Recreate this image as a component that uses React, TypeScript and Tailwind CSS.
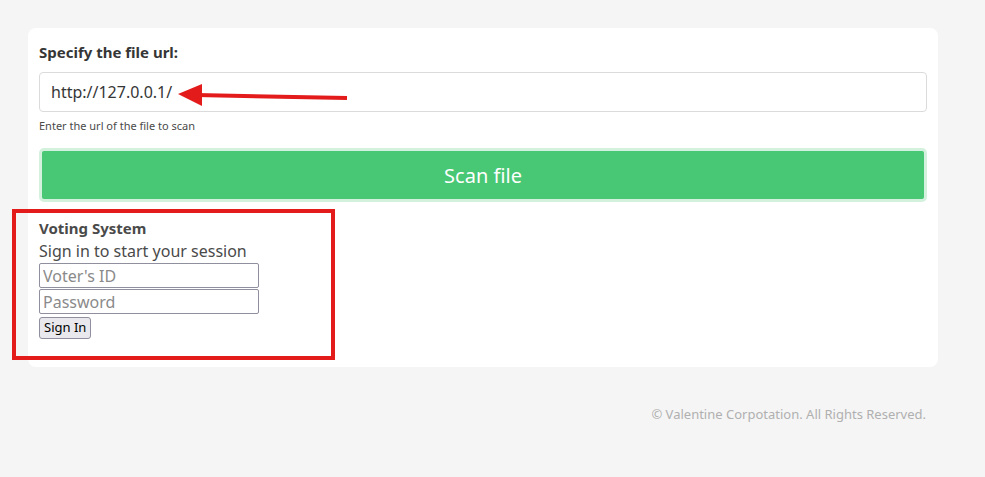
export default function App() {
  return (
    <div className="relative min-h-[477px] bg-[#f5f5f5] font-['Noto_Sans',sans-serif] text-[#363636]">
      <div className="pl-[28px] pr-[47px] pt-[28px]">
        <div className="rounded-lg bg-white px-[11px] pt-[13px] pb-[28px]">
          <label className="block text-[15px] font-bold leading-[22px]">Specify the file url:</label>
          <div className="mt-[9px] flex h-[40px] items-center rounded border border-[#dbdbdb] px-[11px] text-[16px]">
            http://127.0.0.1/
          </div>
          <p className="mt-[6px] text-[11px] leading-[16px] text-[#4a4a4a]">Enter the url of the file to scan</p>
          <button className="mt-[14px] flex h-[54px] w-full items-center justify-center rounded-[5px] border-[3px] border-[#d4f1de] bg-[#48c774] pt-[2px] text-[20px] text-white">
            Scan file
          </button>
          <div className="mt-[15px] text-[15px] font-bold leading-[22px] text-[#4a4a4a]">Voting System</div>
          <div className="text-[16px] leading-[24px] text-[#4a4a4a]">Sign in to start your session</div>
          <input
            className="block h-[25px] w-[220px] rounded-[2px] border border-[#8f8f9d] px-[3px] text-[16px] placeholder:text-[#8a8a8a]"
            placeholder="Voter's ID"
          />
          <input
            className="mt-px block h-[25px] w-[220px] rounded-[2px] border border-[#8f8f9d] px-[3px] text-[16px] placeholder:text-[#8a8a8a]"
            placeholder="Password"
          />
          <button className="mt-[3px] block h-[22px] rounded-[3px] border border-[#8f8f9d] bg-[#e9e9ed] px-[4px] text-[13px] text-black">
            Sign In
          </button>
        </div>
      </div>
      <footer className="mt-[38px] pr-[59px] text-right text-[13px] text-[#b0b0b0]">
        © Valentine Corpotation. All Rights Reserved.
      </footer>

      {/* annotations */}
      <div className="absolute left-[12px] top-[209px] h-[151px] w-[323px] border-4 border-[#e31b1b]" />
      <svg className="absolute left-[176px] top-[82px]" width="175" height="28" viewBox="0 0 175 28">
        <line x1="20" y1="13" x2="171" y2="16" stroke="#e31b1b" strokeWidth="4" />
        <polygon points="2,12 26,2 26,24" fill="#e31b1b" />
      </svg>
    </div>
  );
}
